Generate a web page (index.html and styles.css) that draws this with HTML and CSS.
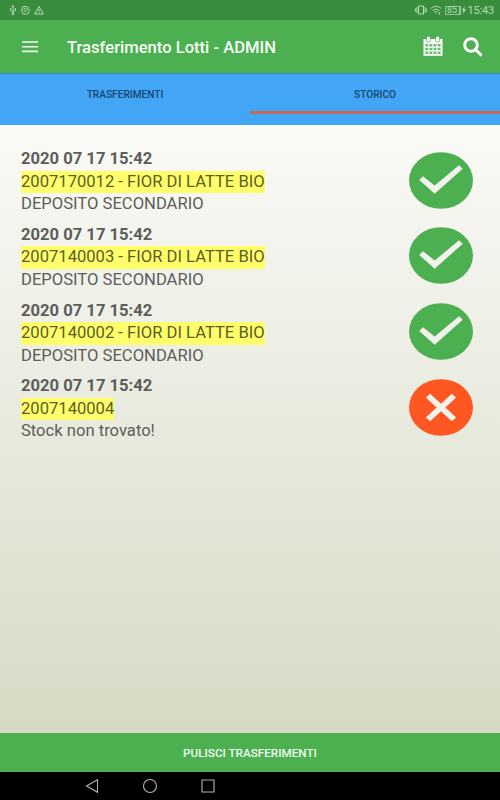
FILE: index.html
```html
<!DOCTYPE html>
<html lang="it">

<head>
    <meta charset="utf-8">
    <meta name="viewport" content="width=device-width, initial-scale=1.0">
    <title>Trasferimento Lotti</title>
    <link rel="stylesheet" href="styles.css">
</head>

<body>
    <div class="statusbar">
        <div class="status_left">
            <svg width="8" height="12" viewBox="0 0 8 12"><path d="M4 10V1.500M1.500 4v2.500L4 8l2.500-1.500V4M3 3l1-1.500L5 3" /><circle cx="4" cy="10" r=".8" /></svg>
            <svg width="9" height="10" viewBox="0 0 9 10"><path d="M6.500 1.500H3A2 2 0 0 0 1 3.500V7a2 2 0 0 0 2 2h2.500A2.500 2.500 0 0 0 8 6.500V4M3 5.500l1.500 1L8 2M2.500 4L5 3" /></svg>
            <svg width="10" height="10" viewBox="0 0 10 10"><path d="M5 1.500L9.300 9H.7zM5 4v2.500M5 7.300v.8" /></svg>
        </div>
        <div class="status_right">
            <svg width="12" height="10" viewBox="0 0 12 10"><path d="M3.500 1h5v8h-5zM1.900 2v6M10.100 2v6M.5 3.500v3M11.500 3.500v3" /></svg>
            <svg class="wifi" width="12" height="10" viewBox="0 0 12 10"><path d="M.7 3.500Q6-1 11.300 3.500M2.500 5.500q3.500-3 7 0M4.300 7.300q1.700-1.500 3.400 0M6 8.500v.8M9.500 7v2.500" /></svg>
            <span class="battery">85</span>
            <svg class="bolt" width="4" height="8" viewBox="0 0 4 8"><path d="M2.500 0L0 4.500h1.500L1 8l3-4.800H2.300z" /></svg>
            <span class="clock">15:43</span>
        </div>
    </div>

    <header class="appbar">
        <svg class="menuknap" width="16" height="12" viewBox="0 0 16 12"><path d="M0 1h16M0 5.700h16M0 10.400h16" /></svg>
        <h1>Trasferimento Lotti - ADMIN</h1>
        <svg class="calendar" width="20" height="21" viewBox="0 0 20 21">
            <path class="fill" d="M.5 3h19v16.800H.5z" />
            <path class="holes" d="M2.300 8h3v2.500h-3zM6.400 8h3v2.500h-3zM10.500 8h3v2.500h-3zM14.600 8h3v2.500h-3zM2.300 11.700h3v2.600h-3zM6.400 11.700h3v2.600h-3zM10.500 11.700h3v2.600h-3zM14.600 11.700h3v2.600h-3zM2.300 15.500h3v2.500h-3zM6.400 15.500h3v2.500h-3zM10.500 15.500h3v2.500h-3zM14.600 15.500h3v2.500h-3z" />
            <rect class="ring" x="3.500" y=".2" width="3.800" height="5.800" rx="1.500" />
            <rect class="ring" x="12.700" y=".2" width="3.800" height="5.800" rx="1.500" />
        </svg>
        <svg class="search" width="20" height="20" viewBox="0 0 20 20"><circle cx="8" cy="8" r="6.300" /><path d="M12.500 12.500l5.300 5.300" /></svg>
    </header>

    <nav class="tabs">
        <div class="tab">TRASFERIMENTI</div>
        <div class="tab valgt">STORICO</div>
    </nav>

    <section class="liste">
        <article class="lotto">
            <div class="testo">
                <p class="data">2020 07 17 15:42</p>
                <p><span class="codice">2007170012 - FIOR DI LATTE BIO</span></p>
                <p>DEPOSITO SECONDARIO</p>
            </div>
            <svg class="stato ok" width="64" height="57" viewBox="0 0 64 57"><ellipse cx="32" cy="28.500" rx="32" ry="28.300" /><path d="M14 24.200L25.700 33.500 50 13.200l3.800 3.500-28.100 25L10.200 28z" /></svg>
        </article>
        <article class="lotto">
            <div class="testo">
                <p class="data">2020 07 17 15:42</p>
                <p><span class="codice">2007140003 - FIOR DI LATTE BIO</span></p>
                <p>DEPOSITO SECONDARIO</p>
            </div>
            <svg class="stato ok" width="64" height="57" viewBox="0 0 64 57"><ellipse cx="32" cy="28.500" rx="32" ry="28.300" /><path d="M14 24.200L25.700 33.500 50 13.200l3.800 3.500-28.100 25L10.200 28z" /></svg>
        </article>
        <article class="lotto">
            <div class="testo">
                <p class="data">2020 07 17 15:42</p>
                <p><span class="codice">2007140002 - FIOR DI LATTE BIO</span></p>
                <p>DEPOSITO SECONDARIO</p>
            </div>
            <svg class="stato ok" width="64" height="57" viewBox="0 0 64 57"><ellipse cx="32" cy="28.500" rx="32" ry="28.300" /><path d="M14 24.200L25.700 33.500 50 13.200l3.800 3.500-28.100 25L10.200 28z" /></svg>
        </article>
        <article class="lotto">
            <div class="testo">
                <p class="data">2020 07 17 15:42</p>
                <p><span class="codice">2007140004</span></p>
                <p>Stock non trovato!</p>
            </div>
            <svg class="stato errore" width="64" height="57" viewBox="0 0 64 57"><ellipse cx="32" cy="28.500" rx="32" ry="28.300" /><path d="M21.200 14.700L32 24.700l10.800-10 4.400 3.800L36.300 28.500l10.900 9.900-4.400 3.900L32 32.300l-10.800 10-4.400-3.900 10.900-9.900-10.900-10z" /></svg>
        </article>
    </section>

    <button class="pulisci">PULISCI TRASFERIMENTI</button>

    <footer class="navbar">
        <svg width="14" height="16" viewBox="0 0 14 16"><path d="M12.500 1.700v12.600L1.500 8z" /></svg>
        <svg width="16" height="16" viewBox="0 0 16 16"><circle cx="8" cy="8" r="6.500" /></svg>
        <svg width="14" height="16" viewBox="0 0 14 16"><path d="M1 2h12v12H1z" /></svg>
    </footer>
</body>

</html>
```
FILE: styles.css
```css
body {
    margin: 0;
    height: 800px;
    display: flex;
    flex-direction: column;
    font-family: Roboto, "Liberation Sans", sans-serif;
    background-color: #000;
    overflow: hidden;
}

svg {
    display: block;
    flex: none;
    fill: none;
}

p,
h1 {
    margin: 0;
}

/* ------- status bar -----------*/
.statusbar {
    height: 20px;
    flex: none;
    display: flex;
    justify-content: space-between;
    align-items: center;
    padding: 0 6px 0 9px;
    background-color: #388e3c;
    color: #b5dab6;
}

.statusbar svg {
    stroke: #b5dab6;
    stroke-width: 1;
}

.status_left,
.status_right {
    display: flex;
    align-items: center;
}

.status_left {
    gap: 4px;
}

.wifi {
    margin-left: 3px;
}

.battery {
    box-sizing: border-box;
    width: 16px;
    height: 9px;
    margin-left: 3px;
    border: 1px solid #92c494;
    border-right-width: 2px;
    font-size: 9px;
    line-height: 7px;
    text-align: center;
}

.statusbar .bolt {
    margin: 0 2px 0 1px;
    fill: #b5dab6;
    stroke: none;
}

.clock {
    font-size: 11px;
    line-height: 20px;
    letter-spacing: -0.2px;
    padding-top: 1px;
}

/* ------- app bar -----------*/
.appbar {
    height: 53px;
    flex: none;
    display: flex;
    align-items: center;
    padding: 0 17px 0 22px;
    background-color: #4caf50;
}

.menuknap {
    stroke: #f1faf1;
    stroke-width: 1.6;
}

.appbar h1 {
    flex: 1;
    margin-left: 29px;
    padding-top: 2px;
    font-size: 16.6px;
    font-weight: 500;
    color: #f6fcf6;
}

.calendar {
    margin-right: 20px;
}

.calendar .fill {
    fill: #fff;
}

.calendar .holes {
    fill: #6dbe70;
}

.calendar .ring {
    fill: #fff;
    stroke: #4caf50;
    stroke-width: 0.8;
}

.search {
    stroke: #fff;
    stroke-width: 3;
    stroke-linecap: round;
}

/* ------- tabs -----------*/
.tabs {
    height: 52px;
    flex: none;
    display: flex;
    background-color: #42a5f5;
    box-shadow: inset 0 2px 1px -1px #358fac;
}

.tab {
    flex: 1;
    height: 38px;
    border-bottom: 3px solid transparent;
    font-size: 10.15px;
    font-weight: 500;
    line-height: 43px;
    text-align: center;
    color: #14466f;
}

.tab.valgt {
    border-color: #c66a60;
}

/* ------- liste -----------*/
.liste {
    flex: 1;
    display: flex;
    flex-direction: column;
    gap: 8.3px;
    padding: 23px 27px 0 21px;
    background-image: linear-gradient(#fafaf7, #d6dac4);
}

.lotto {
    display: flex;
    justify-content: space-between;
}

.testo {
    font-size: 16.6px;
    line-height: 22.5px;
    color: #5d5d5a;
}

.data {
    font-weight: bold;
}

.codice {
    display: inline-block;
    background-color: #ffff6b;
    color: #5e5e26;
}

.stato {
    margin-top: 3.500px;
}

.stato path {
    fill: #f1f2eb;
}

.ok ellipse {
    fill: #4caf50;
}

.errore ellipse {
    fill: #ff5722;
}

/* ------- bund -----------*/
.pulisci {
    height: 39px;
    flex: none;
    border: none;
    padding: 0;
    background-color: #4caf50;
    color: #f1faf1;
    font-family: inherit;
    font-size: 11.7px;
    font-weight: 500;
}

.navbar {
    height: 28px;
    flex: none;
    display: flex;
    align-items: center;
    gap: 43px;
    padding-left: 85px;
    background-color: #000;
}

.navbar svg {
    stroke: #b4b4b4;
    stroke-width: 1.1;
}
```
